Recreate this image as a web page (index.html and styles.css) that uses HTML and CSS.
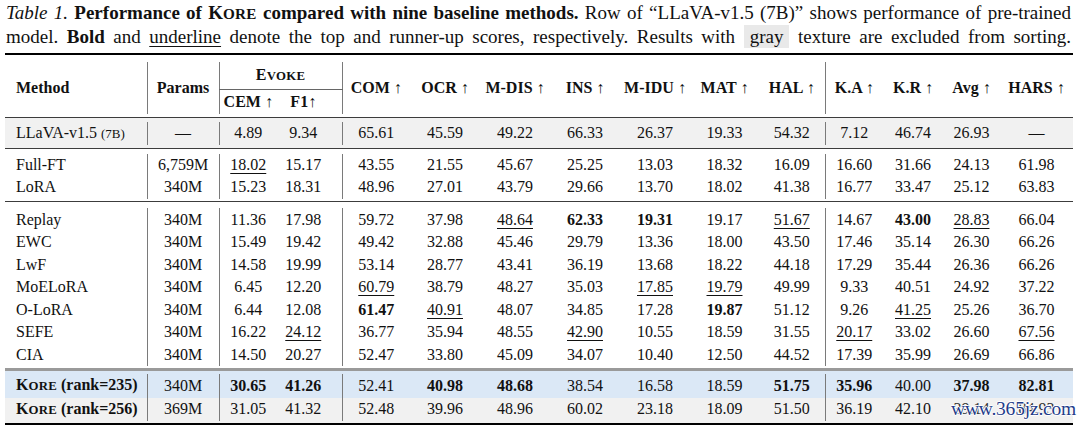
FILE: index.html
```html
<!DOCTYPE html>
<html lang="en">
<head>
<meta charset="utf-8">
<title>Table 1</title>
<link rel="stylesheet" href="styles.css">
</head>
<body>
<div class="page">
  <p class="caption">
    <span class="line"><span class="cap-label">Table 1.</span> <b>Performance of K<span class="smc">ORE</span> compared with nine baseline methods.</b> Row of “LLaVA-v1.5 (7B)” shows performance of pre-trained</span>
    <span class="line">model. <b>Bold</b> and <u>underline</u> denote the top and runner-up scores, respectively. Results with <span class="graybox">gray</span> texture are excluded from sorting.</span>
  </p>
  <table class="results">
    <colgroup>
      <col class="c-method"><col class="c-params"><col class="c-cem"><col class="c-f1">
      <col class="c-com"><col class="c-ocr"><col class="c-mdis"><col class="c-ins"><col class="c-midu"><col class="c-mat"><col class="c-hal">
      <col class="c-ka"><col class="c-kr"><col class="c-avg"><col class="c-hars">
    </colgroup>
    <thead>
      <tr class="rule rule-top"><td colspan="15"></td></tr>
      <tr class="h1">
        <th class="m" rowspan="2">Method</th>
        <th class="vl" rowspan="2">Params</th>
        <th class="vl evoke" colspan="2">E<span class="smc">VOKE</span></th>
        <th class="vl" rowspan="2">COM <span class="arr">↑</span></th>
        <th rowspan="2">OCR <span class="arr">↑</span></th>
        <th rowspan="2">M-DIS <span class="arr">↑</span></th>
        <th rowspan="2">INS <span class="arr">↑</span></th>
        <th rowspan="2">M-IDU <span class="arr">↑</span></th>
        <th rowspan="2">MAT <span class="arr">↑</span></th>
        <th rowspan="2">HAL <span class="arr">↑</span></th>
        <th class="vl" rowspan="2">K.A <span class="arr">↑</span></th>
        <th rowspan="2">K.R <span class="arr">↑</span></th>
        <th rowspan="2">Avg <span class="arr">↑</span></th>
        <th rowspan="2">HARS <span class="arr">↑</span></th>
      </tr>
      <tr class="h2">
        <th class="vl">CEM <span class="arr">↑</span></th>
        <th class="f1">F1<span class="arr">↑</span></th>
      </tr>
      <tr class="rule rule-head"><td colspan="15"></td></tr>
    </thead>
    <tbody>
      <tr class="r base">
        <td>LLaVA-v1.5 <small>(7B)</small></td><td>—</td><td>4.89</td><td>9.34</td><td>65.61</td><td>45.59</td><td>49.22</td><td>66.33</td><td>26.37</td><td>19.33</td><td>54.32</td><td>7.12</td><td>46.74</td><td>26.93</td><td>—</td>
      </tr>
      <tr class="rule rule-a"><td colspan="15"></td></tr>
      <tr class="r">
        <td>Full-FT</td><td>6,759M</td><td><u>18.02</u></td><td>15.17</td><td>43.55</td><td>21.55</td><td>45.67</td><td>25.25</td><td>13.03</td><td>18.32</td><td>16.09</td><td>16.60</td><td>31.66</td><td>24.13</td><td>61.98</td>
      </tr>
      <tr class="r">
        <td>LoRA</td><td>340M</td><td>15.23</td><td>18.31</td><td>48.96</td><td>27.01</td><td>43.79</td><td>29.66</td><td>13.70</td><td>18.02</td><td>41.38</td><td>16.77</td><td>33.47</td><td>25.12</td><td>63.83</td>
      </tr>
      <tr class="rule rule-b"><td colspan="15"></td></tr>
      <tr class="r">
        <td>Replay</td><td>340M</td><td>11.36</td><td>17.98</td><td>59.72</td><td>37.98</td><td><u>48.64</u></td><td><b>62.33</b></td><td><b>19.31</b></td><td>19.17</td><td><u>51.67</u></td><td>14.67</td><td><b>43.00</b></td><td><u>28.83</u></td><td>66.04</td>
      </tr>
      <tr class="r">
        <td>EWC</td><td>340M</td><td>15.49</td><td>19.42</td><td>49.42</td><td>32.88</td><td>45.46</td><td>29.79</td><td>13.36</td><td>18.00</td><td>43.50</td><td>17.46</td><td>35.14</td><td>26.30</td><td>66.26</td>
      </tr>
      <tr class="r">
        <td>LwF</td><td>340M</td><td>14.58</td><td>19.99</td><td>53.14</td><td>28.77</td><td>43.41</td><td>36.19</td><td>13.68</td><td>18.22</td><td>44.18</td><td>17.29</td><td>35.44</td><td>26.36</td><td>66.26</td>
      </tr>
      <tr class="r">
        <td>MoELoRA</td><td>340M</td><td>6.45</td><td>12.20</td><td><u>60.79</u></td><td>38.79</td><td>48.27</td><td>35.03</td><td><u>17.85</u></td><td><u>19.79</u></td><td>49.99</td><td>9.33</td><td>40.51</td><td>24.92</td><td>37.22</td>
      </tr>
      <tr class="r">
        <td>O-LoRA</td><td>340M</td><td>6.44</td><td>12.08</td><td><b>61.47</b></td><td><u>40.91</u></td><td>48.07</td><td>34.85</td><td>17.28</td><td><b>19.87</b></td><td>51.12</td><td>9.26</td><td><u>41.25</u></td><td>25.26</td><td>36.70</td>
      </tr>
      <tr class="r">
        <td>SEFE</td><td>340M</td><td>16.22</td><td><u>24.12</u></td><td>36.77</td><td>35.94</td><td>48.55</td><td><u>42.90</u></td><td>10.55</td><td>18.59</td><td>31.55</td><td><u>20.17</u></td><td>33.02</td><td>26.60</td><td><u>67.56</u></td>
      </tr>
      <tr class="r">
        <td>CIA</td><td>340M</td><td>14.50</td><td>20.27</td><td>52.47</td><td>33.80</td><td>45.09</td><td>34.07</td><td>10.40</td><td>12.50</td><td>44.52</td><td>17.39</td><td>35.99</td><td>26.69</td><td>66.86</td>
      </tr>
      <tr class="rule rule-c"><td colspan="15"></td></tr>
      <tr class="r ours">
        <td><b>K<span class="smc">ORE</span> (rank=235)</b></td><td>340M</td><td><b>30.65</b></td><td><b>41.26</b></td><td>52.41</td><td><b>40.98</b></td><td><b>48.68</b></td><td>38.54</td><td>16.58</td><td>18.59</td><td><b>51.75</b></td><td><b>35.96</b></td><td>40.00</td><td><b>37.98</b></td><td><b>82.81</b></td>
      </tr>
      <tr class="r base last">
        <td><b>K<span class="smc">ORE</span> (rank=256)</b></td><td>369M</td><td>31.05</td><td>41.32</td><td>52.48</td><td>39.96</td><td>48.96</td><td>60.02</td><td>23.18</td><td>18.09</td><td>51.50</td><td>36.19</td><td>42.10</td><td class="under-wm">39.14</td><td class="under-wm">84.93</td>
      </tr>
      <tr class="rule rule-bot"><td colspan="15"></td></tr>
    </tbody>
  </table>
  <div class="watermark">www.365jz.com</div>
</div>
</body>
</html>
```

FILE: styles.css
```css
* { box-sizing: border-box; }

body {
  margin: 0;
  background: #fff;
  color: #111;
  font-family: "Liberation Serif", "Times New Roman", serif;
}

.page {
  position: relative;
  width: 1080px;
  height: 426px;
  overflow: hidden;
}

/* ---------- caption ---------- */
.caption {
  margin: 0 0 0 6px;
  padding-top: 0.5px;
  width: 1065px;
  font-size: 19px;
  line-height: 23px;
}

.caption .line {
  display: block;
  text-align: justify;
  text-align-last: justify;
}

.cap-label { font-style: italic; }

/* hand-made small caps (LaTeX \textsc look) */
.smc {
  font-size: 0.8em;
  letter-spacing: 0.02em;
}

.caption u {
  text-decoration-thickness: 1px;
  text-underline-offset: 3px;
}

.graybox {
  display: inline-block;
  background: #e9e9e9;
  padding: 0 6px;
  line-height: 23px;
}

/* ---------- table ---------- */
.results {
  border-collapse: collapse;
  table-layout: fixed;
  width: 1068px;
  margin: 3.5px 0 0 5px;
  font-size: 16px;
}

.c-method { width: 142px; }
.c-params { width: 72px; }
.c-cem    { width: 58px; }
.c-f1     { width: 65px; }
.c-com    { width: 68px; }
.c-ocr    { width: 70px; }
.c-mdis   { width: 70px; }
.c-ins    { width: 70px; }
.c-midu   { width: 70px; }
.c-mat    { width: 69px; }
.c-hal    { width: 66px; }
.c-ka     { width: 58px; }
.c-kr     { width: 60px; }
.c-avg    { width: 57px; }
.c-hars   { width: 73px; }

.results th,
.results td {
  padding: 0;
  text-align: center;
  vertical-align: middle;
  white-space: nowrap;
  line-height: 18px;
}

.results th { font-weight: bold; }

.results th.m {
  text-align: left;
  padding-left: 11px;
}

.arr { font-weight: normal; }

.h1 th { height: 27px; }
.h2 th { height: 25px; }

.vl { border-left: 1px solid #7a7a7a; }

.evoke {
  border-bottom: 1px solid #666;
  letter-spacing: 0.5px;
}

.results th.f1 { padding-right: 12px; }

/* body rows */
.r td { height: 22.5px; }

.r td:nth-child(1) {
  text-align: left;
  padding-left: 11px;
}

.r td:nth-child(2),
.r td:nth-child(3),
.r td:nth-child(5),
.r td:nth-child(12) {
  border-left: 1px solid #7a7a7a;
}

.r td:nth-child(4) { padding-right: 12px; }

.r small { font-size: 13px; }

.r u {
  text-decoration-thickness: 1px;
  text-underline-offset: 3px;
}

.base td { background: #f1f1f1; }
.ours td { background: #dbe8f6; height: 24px; }
.last td { height: 23px; }

.under-wm { color: #333; }

/* ---------- booktabs-like rules ---------- */
.rule td {
  padding: 0;
  font-size: 0;
  line-height: 0;
}

.rule-top td {
  height: 11px;
  background: linear-gradient(#fff 0 1.5px, #000 1.5px 3.5px, #fff 3.5px);
}

.rule-head td {
  height: 8px;
  background: linear-gradient(#fff 0 3px, #3c3c3c 3px 4.5px, #f1f1f1 4.5px);
}

.rule-a td {
  height: 9px;
  background: linear-gradient(#f1f1f1 0 3px, #3c3c3c 3px 4.5px, #fff 4.5px);
}

.rule-b td {
  height: 9.75px;
  background: linear-gradient(#fff 0 2px, #3c3c3c 2px 3.5px, #fff 3.5px);
}

.rule-c td {
  height: 7.75px;
  background: linear-gradient(#fff 0 2.5px, #9a9a9a 2.5px 5px, #dbe8f6 5px);
}

.rule-bot td {
  height: 5px;
  background: linear-gradient(#f1f1f1 0 2px, #000 2px 4px, #fff 4px);
}

/* ---------- watermark overlay ---------- */
.watermark {
  position: absolute;
  left: 951px;
  top: 398px;
  font-family: "Liberation Serif", "Times New Roman", serif;
  font-size: 19.5px;
  line-height: 22px;
  letter-spacing: -0.2px;
  color: #1f3c8a;
  text-shadow: 1px 0 0 #fff, -1px 0 0 #fff, 0 1px 0 #fff, 0 -1px 0 #fff, 0 0 2px #fff;
}
```
